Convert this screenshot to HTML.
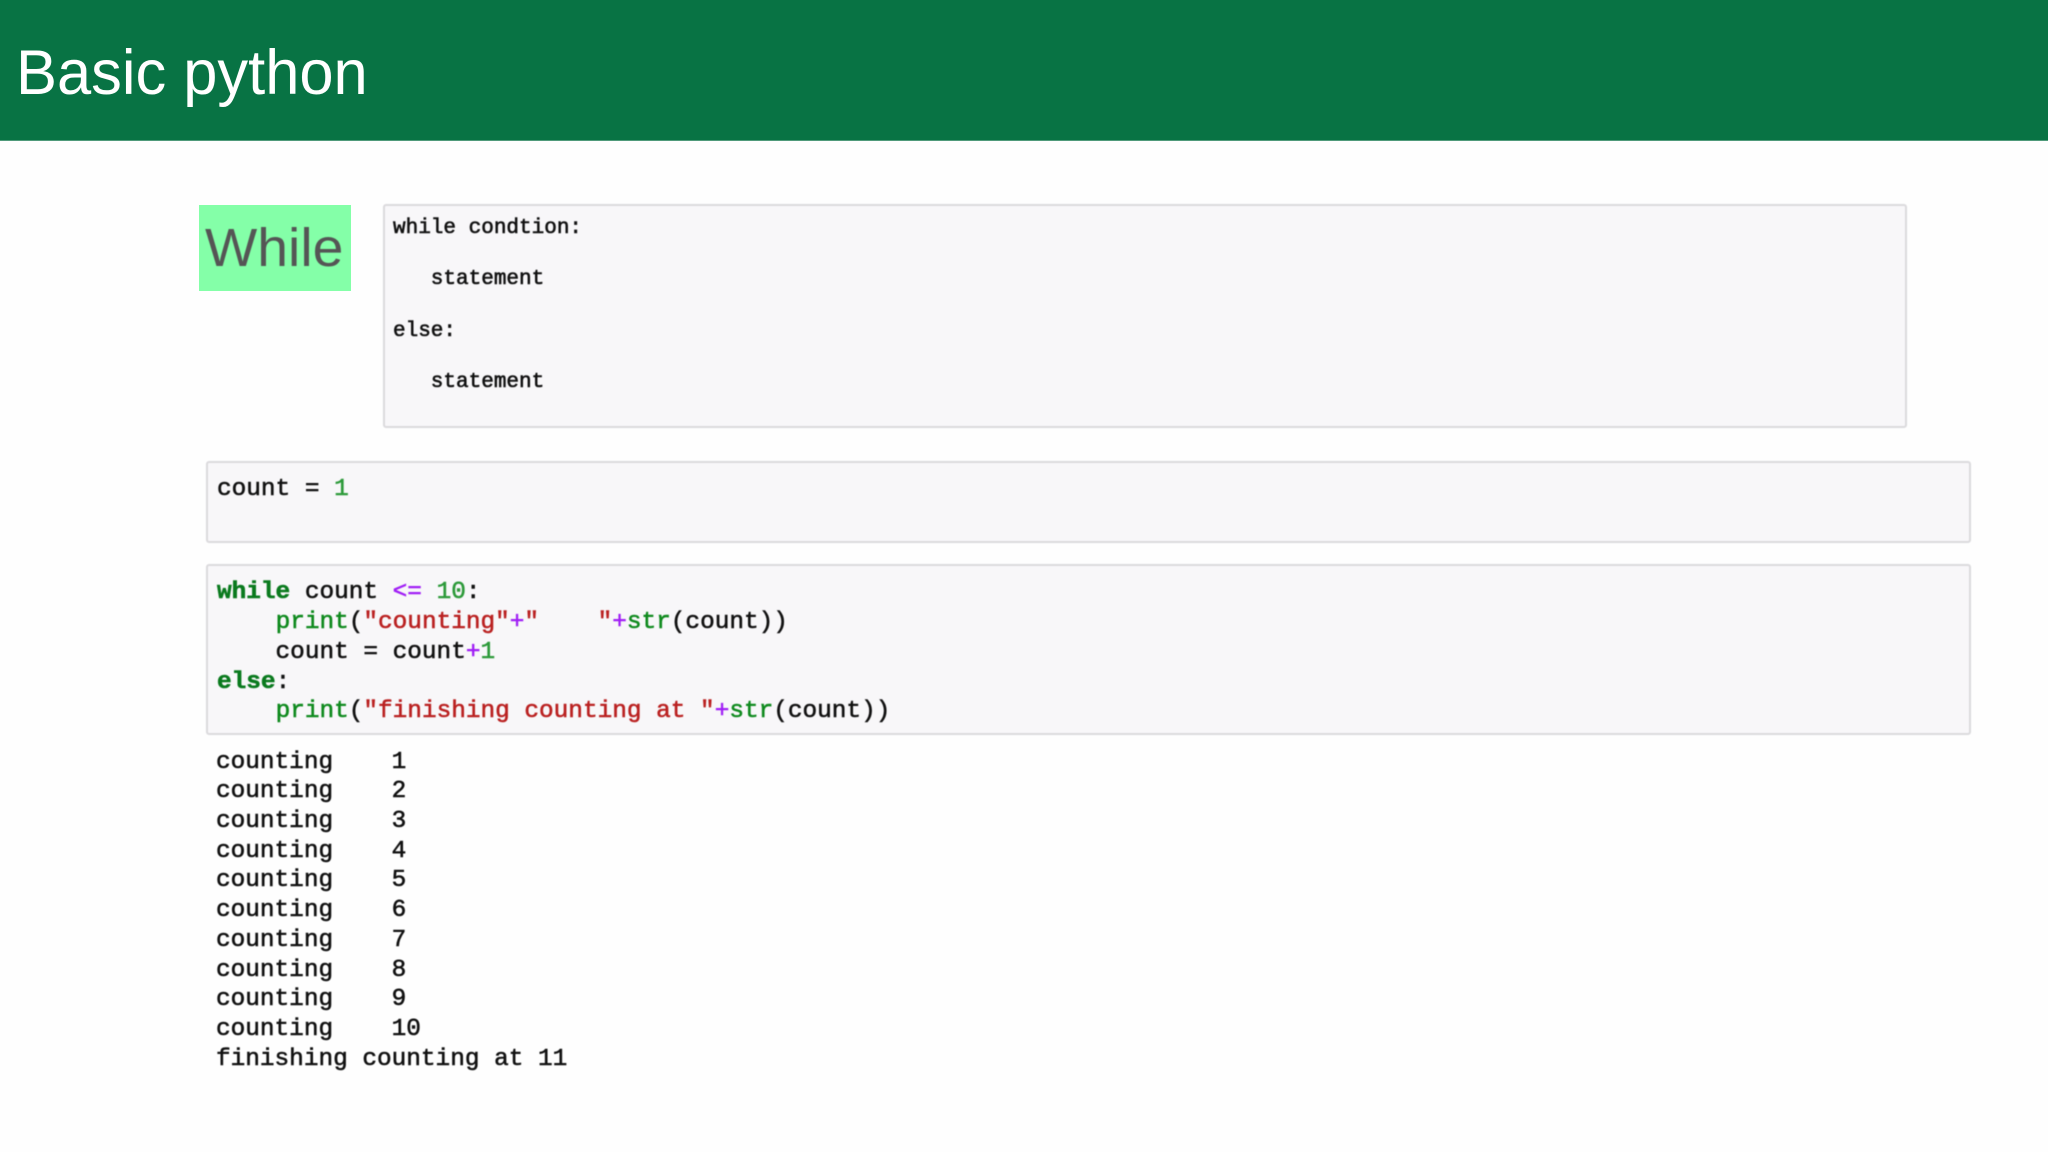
<!DOCTYPE html>
<html lang="en">
<head>
<meta charset="utf-8">
<title>Basic python</title>
<style>
html,body{margin:0;padding:0;width:2048px;height:1152px;overflow:hidden;background:#fefefe;}
#page{position:relative;width:2048px;height:1152px;overflow:hidden;background:#fefefe;}
.abs{position:absolute;white-space:pre;}
#hdr{left:0;top:0;width:2048px;height:140px;background:#087344;border-bottom:1px solid #4f9a7a;}
#title{left:15.5px;top:43px;font:63px/60px "Liberation Sans",sans-serif;color:#fff;transform-origin:0 0;transform:scaleX(.975);filter:blur(.3px);}
#tag{left:199px;top:205px;width:152px;height:86px;background:#84ffa8;}
#tagt{left:205px;top:220.5px;font:54px/54px "Liberation Sans",sans-serif;color:#555;transform-origin:0 0;transform:scaleX(1.025);filter:blur(.4px);}
.box{position:absolute;box-sizing:border-box;background:#f8f7f9;border:2px solid #dbdadd;border-radius:3px;filter:blur(.4px);}
.code{font-family:"Liberation Mono",monospace;color:#111;filter:blur(.45px);-webkit-text-stroke:.55px currentColor;}
.lg{font-size:24.4px;line-height:29.7px;}
.sm{font-size:21px;line-height:51.4px;-webkit-text-stroke:.6px currentColor;}
.k{color:#0a7a1e;font-weight:bold;}
.b{color:#0f8a1e;}
.s{color:#ba2121;}
.o{color:#a01ff5;}
.n{color:#2d9a3a;}
</style>
</head>
<body>
<div id="page">
<div id="hdr" class="abs"></div>
<div id="title" class="abs">Basic python</div>
<div id="tag" class="abs"></div>
<div id="tagt" class="abs">While</div>

<div class="box" style="left:383px;top:204px;width:1524px;height:224px;"></div>
<div class="abs code sm" style="left:393px;top:203px;">while condtion:
   statement
else:
   statement</div>

<div class="box" style="left:206px;top:461px;width:1765px;height:82px;"></div>
<div class="abs code lg" style="left:217px;top:474.6px;">count = <span class="n">1</span></div>

<div class="box" style="left:206px;top:564px;width:1765px;height:171px;"></div>
<div class="abs code lg" style="left:217px;top:578.4px;"><span class="k">while</span> count <span class="o">&lt;=</span> <span class="n">10</span>:
    <span class="b">print</span>(<span class="s">"counting"</span><span class="o">+</span><span class="s">"    "</span><span class="o">+</span><span class="b">str</span>(count))
    count = count<span class="o">+</span><span class="n">1</span>
<span class="k">else</span>:
    <span class="b">print</span>(<span class="s">"finishing counting at "</span><span class="o">+</span><span class="b">str</span>(count))</div>

<div class="abs code lg" style="left:216px;top:747.6px;">counting    1
counting    2
counting    3
counting    4
counting    5
counting    6
counting    7
counting    8
counting    9
counting    10
finishing counting at 11</div>
</div>
</body>
</html>
